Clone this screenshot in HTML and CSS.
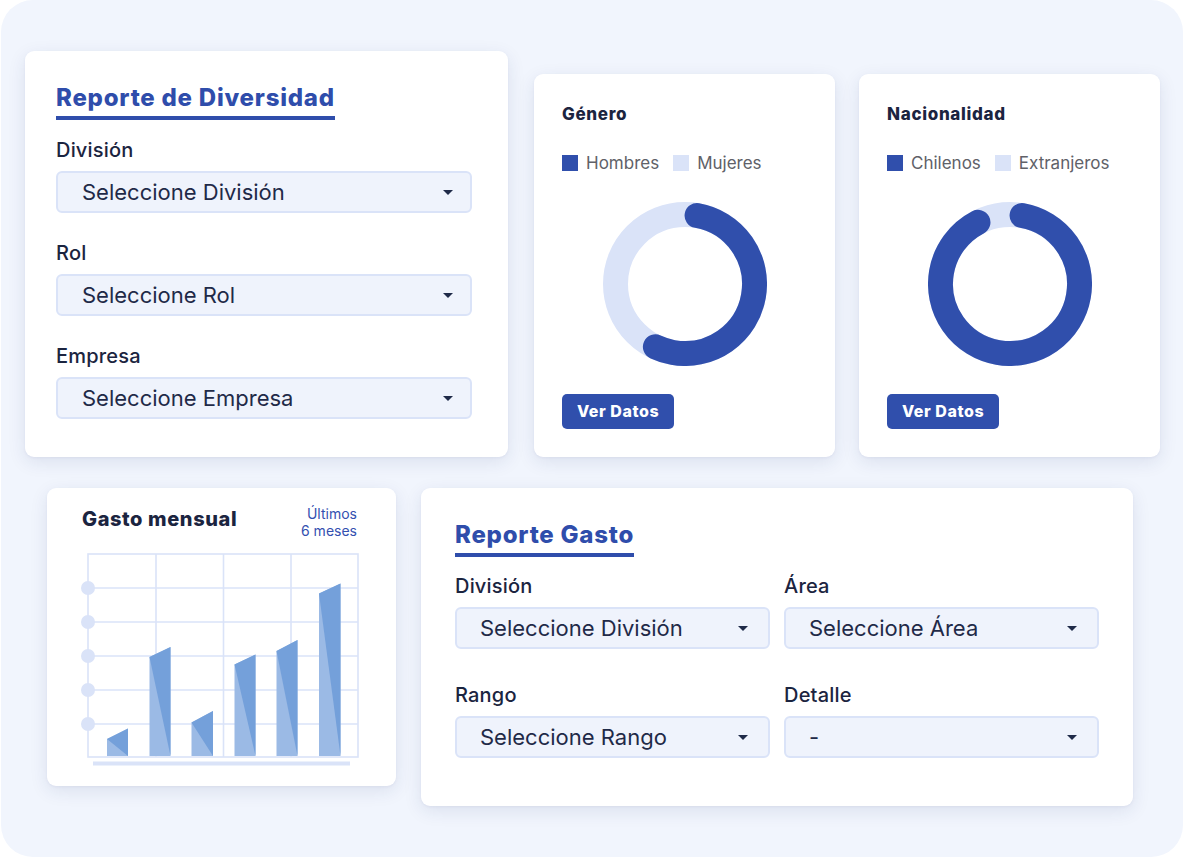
FILE: index.html
```html
<!DOCTYPE html>
<html lang="es">
<head>
<meta charset="utf-8">
<title>Reportes</title>
<link rel="stylesheet" href="styles.css">
</head>
<body>
<div class="frame">
  <div class="row row-top">
    <section class="card card-div">
      <h2 class="title">Reporte de Diversidad</h2>
      <div class="fields">
        <div class="field">
          <div class="label">División</div>
          <div class="select"><span class="select-text">Seleccione División</span><i class="caret"></i></div>
        </div>
        <div class="field">
          <div class="label">Rol</div>
          <div class="select"><span class="select-text">Seleccione Rol</span><i class="caret"></i></div>
        </div>
        <div class="field">
          <div class="label">Empresa</div>
          <div class="select"><span class="select-text">Seleccione Empresa</span><i class="caret"></i></div>
        </div>
      </div>
    </section>

    <section class="card card-chart">
      <h3 class="chart-title">Género</h3>
      <div class="legend">
        <span class="legend-item"><i class="swatch swatch-dark"></i>Hombres</span>
        <span class="legend-item"><i class="swatch swatch-light"></i>Mujeres</span>
      </div>
      <svg class="donut" width="164" height="164" viewBox="0 0 164 164">
        <circle cx="82" cy="82" r="69.5" fill="none" stroke="#dae3f8" stroke-width="25"/>
        <circle cx="82" cy="82" r="69.5" fill="none" stroke="#304fac" stroke-width="25" stroke-linecap="round" stroke-dasharray="236.5 436.7" transform="rotate(-80 82 82)"/>
      </svg>
      <button class="btn">Ver Datos</button>
    </section>

    <section class="card card-chart">
      <h3 class="chart-title">Nacionalidad</h3>
      <div class="legend">
        <span class="legend-item"><i class="swatch swatch-dark"></i>Chilenos</span>
        <span class="legend-item"><i class="swatch swatch-light"></i>Extranjeros</span>
      </div>
      <svg class="donut" width="164" height="164" viewBox="0 0 164 164">
        <circle cx="82" cy="82" r="69.5" fill="none" stroke="#dae3f8" stroke-width="25"/>
        <circle cx="82" cy="82" r="69.5" fill="none" stroke="#304fac" stroke-width="25" stroke-linecap="round" stroke-dasharray="390.6 436.7" transform="rotate(-80 82 82)"/>
      </svg>
      <button class="btn">Ver Datos</button>
    </section>
  </div>

  <div class="row row-bottom">
    <section class="card card-spend">
      <div class="spend-head">
        <h3 class="spend-title">Gasto mensual</h3>
        <div class="spend-period">Últimos<br>6 meses</div>
      </div>
      <svg class="bars" width="284" height="222" viewBox="80 548 284 222">
        <g stroke="#dae3f8" stroke-width="1.6" fill="none">
          <rect x="88" y="554" width="270" height="203"/>
          <line x1="156" y1="554" x2="156" y2="757"/>
          <line x1="223.5" y1="554" x2="223.5" y2="757"/>
          <line x1="291" y1="554" x2="291" y2="757"/>
          <line x1="88" y1="588" x2="358" y2="588"/>
          <line x1="88" y1="622" x2="358" y2="622"/>
          <line x1="88" y1="656" x2="358" y2="656"/>
          <line x1="88" y1="690" x2="358" y2="690"/>
          <line x1="88" y1="724" x2="358" y2="724"/>
        </g>
        <g fill="#dae3f8">
          <circle cx="88" cy="588" r="7"/>
          <circle cx="88" cy="622" r="7"/>
          <circle cx="88" cy="656" r="7"/>
          <circle cx="88" cy="690" r="7"/>
          <circle cx="88" cy="724" r="7"/>
          <rect x="93" y="761.5" width="257" height="4"/>
        </g>
        <g>
          <polygon points="107,739 128,728.5 128,756 107,756" fill="#9bbae5"/>
          <polygon points="107,739 128,728.5 128,756" fill="#74a0da"/>
          <polygon points="149.5,657 170.5,647 170.5,756 149.5,756" fill="#9bbae5"/>
          <polygon points="149.5,657 170.5,647 170.5,756" fill="#74a0da"/>
          <polygon points="191.5,722.5 213,711 213,756 191.5,756" fill="#9bbae5"/>
          <polygon points="191.5,722.5 213,711 213,756" fill="#74a0da"/>
          <polygon points="234.5,664.5 255.5,654.5 255.5,756 234.5,756" fill="#9bbae5"/>
          <polygon points="234.5,664.5 255.5,654.5 255.5,756" fill="#74a0da"/>
          <polygon points="276.5,651 297.5,640 297.5,756 276.5,756" fill="#9bbae5"/>
          <polygon points="276.5,651 297.5,640 297.5,756" fill="#74a0da"/>
          <polygon points="319,593.5 340.5,583.5 340.5,756 319,756" fill="#9bbae5"/>
          <polygon points="319,593.5 340.5,583.5 340.5,756" fill="#74a0da"/>
        </g>
      </svg>
    </section>

    <section class="card card-gasto">
      <h2 class="title">Reporte Gasto</h2>
      <div class="grid-fields">
        <div class="field">
          <div class="label">División</div>
          <div class="select select-wide"><span class="select-text">Seleccione División</span><i class="caret"></i></div>
        </div>
        <div class="field">
          <div class="label">Área</div>
          <div class="select select-wide"><span class="select-text">Seleccione Área</span><i class="caret"></i></div>
        </div>
        <div class="field">
          <div class="label">Rango</div>
          <div class="select select-wide"><span class="select-text">Seleccione Rango</span><i class="caret"></i></div>
        </div>
        <div class="field">
          <div class="label">Detalle</div>
          <div class="select select-wide"><span class="select-text">-</span><i class="caret"></i></div>
        </div>
      </div>
    </section>
  </div>
</div>
</body>
</html>
```

FILE: styles.css
```css
* { box-sizing: border-box; }

html, body {
  margin: 0;
  padding: 0;
  background: #ffffff;
}

body {
  font-family: Inter, "Noto Sans", "Liberation Sans", sans-serif;
  color: #1b2440;
}

.frame {
  margin-left: 1px;
  width: 1182px;
  height: 857px;
  background: #f1f5fd;
  border-radius: 32px;
  padding-top: 51px;
  display: flex;
  flex-direction: column;
}

.row {
  display: flex;
  align-items: flex-start;
}

.row-top {
  padding-left: 24px;
}

.row-bottom {
  padding-left: 46px;
  margin-top: 31px;
  gap: 25px;
}

.card {
  background: #ffffff;
  border-radius: 9px;
  box-shadow: 0 5px 18px rgba(30, 48, 110, 0.10), 0 1px 3px rgba(30, 48, 110, 0.05);
}

/* Diversidad card */
.card-div {
  width: 483px;
  padding: 33px 36px 38px 31px;
}

.title {
  margin: 0;
  width: fit-content;
  font-size: 24px;
  line-height: 28px;
  font-weight: 800;
  letter-spacing: 0.032em;
  color: #2f4dab;
  padding-bottom: 4px;
  border-bottom: 4px solid #2f4dab;
}

.fields {
  margin-top: 18px;
  display: flex;
  flex-direction: column;
  gap: 28px;
}

.field {
  display: flex;
  flex-direction: column;
  gap: 9px;
}

.label {
  font-size: 20px;
  line-height: 24px;
  font-weight: 500;
  letter-spacing: 0.01em;
  color: #1b2440;
}

.select {
  height: 42px;
  display: flex;
  align-items: center;
  background: #eff3fc;
  border: 2px solid #dae3f8;
  border-radius: 6px;
  padding: 0 17px 0 24px;
}

.select-wide {
  padding: 0 20px 0 23px;
}

.select-text {
  flex: 1;
  font-size: 22px;
  line-height: 38px;
  color: #1f2a48;
  white-space: nowrap;
}

.caret {
  width: 0;
  height: 0;
  border-left: 5.5px solid transparent;
  border-right: 5.5px solid transparent;
  border-top: 5.5px solid #1f2a48;
}

/* Donut cards */
.card-chart {
  width: 301px;
  height: 383px;
  margin-top: 23px;
  padding: 30px 28px 28px 28px;
  display: flex;
  flex-direction: column;
}

.row-top .card-chart:nth-child(2) { margin-left: 26px; }
.row-top .card-chart:nth-child(3) { margin-left: 24px; }

.chart-title {
  margin: 0;
  font-size: 17px;
  line-height: 20px;
  font-weight: 800;
  letter-spacing: 0.04em;
  color: #1b2440;
}

.legend {
  margin-top: 29px;
  display: flex;
  gap: 14px;
  font-size: 17px;
  line-height: 20px;
  color: #606168;
}

.legend-item {
  display: flex;
  align-items: center;
  gap: 8px;
}

.swatch {
  width: 16px;
  height: 16px;
  display: block;
}

.swatch-dark { background: #304fac; }
.swatch-light { background: #dae3f8; }

.donut {
  display: block;
  margin-top: 29px;
  align-self: center;
  flex: none;
}

.btn {
  margin-top: 28px;
  width: fit-content;
  height: 35px;
  padding: 0 15px;
  border: 0;
  border-radius: 5px;
  background: #304fac;
  color: #ffffff;
  font-family: inherit;
  font-size: 16px;
  font-weight: 800;
  letter-spacing: 0.035em;
  line-height: 35px;
}

/* Gasto mensual */
.card-spend {
  width: 349px;
  height: 298px;
  padding: 17px 39px 0 35px;
}

.spend-head {
  display: flex;
  justify-content: space-between;
  align-items: flex-start;
}

.spend-title {
  margin: 3px 0 0 0;
  font-size: 20px;
  line-height: 23px;
  font-weight: 800;
  letter-spacing: 0.03em;
  color: #1b2440;
}

.spend-period {
  text-align: right;
  font-size: 14px;
  line-height: 17px;
  color: #3450b0;
}

.bars {
  display: block;
  margin: 9px 0 0 -2px;
}

/* Reporte Gasto */
.card-gasto {
  width: 712px;
  height: 318px;
  padding: 33px 34px 0 34px;
}

.grid-fields {
  margin-top: 17px;
  display: grid;
  grid-template-columns: 1fr 1fr;
  column-gap: 14px;
  row-gap: 34px;
}
```
